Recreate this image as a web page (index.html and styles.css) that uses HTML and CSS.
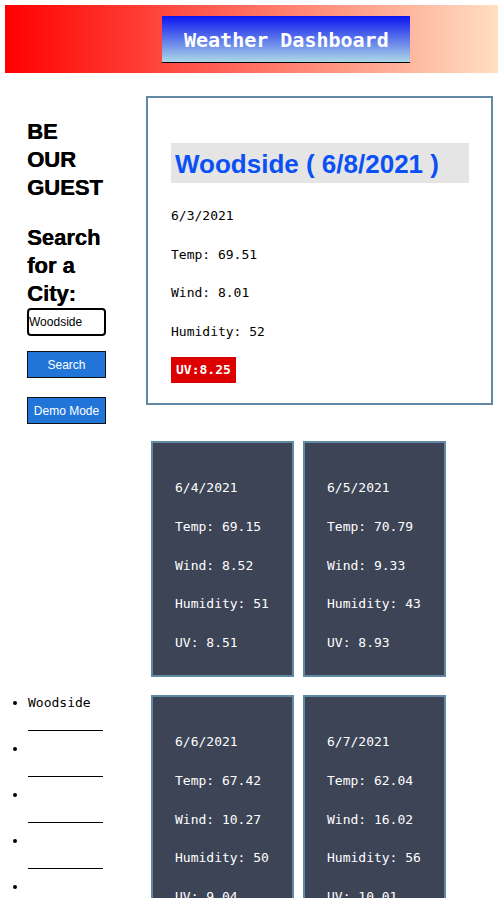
FILE: index.html
```html
<!DOCTYPE html>
<html lang="en">
<head>
<meta charset="utf-8">
<title>Weather Dashboard</title>
<link rel="stylesheet" href="styles.css">
</head>
<body>
<header class="header">
  <h1 class="title">Weather Dashboard</h1>
</header>
<div class="layout">
  <aside class="search">
    <h2 class="tagline">BE OUR GUEST</h2>
    <h2 class="tagline tagline-second">Search for a City:</h2>
    <input class="city-input" type="text" value="Woodside">
    <button class="btn btn-search">Search</button>
    <button class="btn btn-demo">Demo Mode</button>
  </aside>
  <section class="right">
    <div class="current">
      <h2 class="current-title">Woodside ( 6/8/2021 )</h2>
      <p class="line line-first">6/3/2021</p>
      <p class="line">Temp: 69.51</p>
      <p class="line">Wind: 8.01</p>
      <p class="line">Humidity: 52</p>
      <span class="uv">UV:8.25</span>
    </div>
    <div class="forecast forecast-first">
      <div class="day">
        <p class="day-line">6/4/2021</p>
        <p class="day-line">Temp: 69.15</p>
        <p class="day-line">Wind: 8.52</p>
        <p class="day-line">Humidity: 51</p>
        <p class="day-line">UV: 8.51</p>
      </div>
      <div class="day">
        <p class="day-line">6/5/2021</p>
        <p class="day-line">Temp: 70.79</p>
        <p class="day-line">Wind: 9.33</p>
        <p class="day-line">Humidity: 43</p>
        <p class="day-line">UV: 8.93</p>
      </div>
    </div>
  </section>
  <ul class="history">
    <li><span class="city">Woodside</span></li>
    <li><span class="city">&nbsp;</span></li>
    <li><span class="city">&nbsp;</span></li>
    <li><span class="city">&nbsp;</span></li>
    <li><span class="city">&nbsp;</span></li>
  </ul>
  <div class="forecast">
    <div class="day">
      <p class="day-line">6/6/2021</p>
      <p class="day-line">Temp: 67.42</p>
      <p class="day-line">Wind: 10.27</p>
      <p class="day-line">Humidity: 50</p>
      <p class="day-line">UV: 9.04</p>
    </div>
    <div class="day">
      <p class="day-line">6/7/2021</p>
      <p class="day-line">Temp: 62.04</p>
      <p class="day-line">Wind: 16.02</p>
      <p class="day-line">Humidity: 56</p>
      <p class="day-line">UV: 10.01</p>
    </div>
  </div>
</div>
</body>
</html>
```
FILE: styles.css
```css
html, body {
  margin: 0;
  padding: 0;
  background: #ffffff;
  overflow: hidden;
}

body {
  font-family: "DejaVu Sans Mono", "Liberation Mono", monospace;
  font-size: 13px;
  color: #000;
}

.header {
  margin: 5px 0 0 5px;
  height: 68px;
  box-sizing: border-box;
  padding: 11px 0 0 157px;
  background: linear-gradient(to right, #ff0000, #ffdfc2);
}

.title {
  display: inline-block;
  margin: 0;
  height: 47px;
  box-sizing: border-box;
  padding: 0 21px 0 22px;
  line-height: 48px;
  border-bottom: 1px solid #000;
  background: linear-gradient(#0a14f0, #add8e6);
  color: #fff;
  font-family: "DejaVu Sans Mono", monospace;
  font-weight: bold;
  font-size: 20px;
}

.layout {
  display: grid;
  grid-template-columns: 146px 1fr;
  row-gap: 18px;
  margin-top: 23px;
  align-items: start;
}

.search {
  padding: 22px 0 0 27px;
  display: flex;
  flex-direction: column;
  align-items: flex-start;
}

.tagline {
  width: 80px;
  margin: 0;
  font-family: "Liberation Sans", Arial, sans-serif;
  font-weight: bold;
  font-size: 22px;
  line-height: 28px;
  color: #000;
  text-shadow: 0.4px 0 0 #000;
}

.tagline-second {
  margin-top: 22px;
}

.city-input {
  width: 79px;
  height: 28px;
  box-sizing: border-box;
  margin: 0;
  padding: 0;
  border: 2px solid #000;
  border-radius: 4px;
  font-family: "Liberation Sans", Arial, sans-serif;
  font-size: 12px;
  color: #000;
  outline: none;
}

.btn {
  width: 79px;
  height: 27px;
  box-sizing: border-box;
  padding: 0;
  border: 1px solid #111;
  background: #2175d9;
  color: #fff;
  font-family: "Liberation Sans", Arial, sans-serif;
  font-size: 12px;
}

.btn-search {
  margin-top: 15px;
}

.btn-demo {
  margin-top: 19px;
}

.right {
  min-width: 0;
}

.current {
  margin-right: 5px;
  border: 2px solid #6289a3;
  padding: 45px 22px 20px 23px;
}

.current-title {
  margin: 0;
  height: 40px;
  line-height: 42px;
  padding-left: 4px;
  background: #e5e5e5;
  color: #0a50f5;
  font-family: "Liberation Sans", Arial, sans-serif;
  font-weight: bold;
  font-size: 26px;
}

.line {
  margin: 20.7px 0 0;
  line-height: 18px;
}

.line-first {
  margin-top: 24px;
}

.uv {
  display: inline-block;
  margin-top: 16px;
  padding: 0 5px;
  line-height: 26px;
  background: #dd0000;
  color: #fff;
  font-weight: bold;
}

.forecast {
  display: flex;
  gap: 9px;
  margin-left: 5px;
}

.forecast-first {
  margin-top: 36px;
}

.day {
  width: 143px;
  height: 236px;
  box-sizing: border-box;
  border: 2px solid #6289a3;
  background: #3c4456;
  color: #fff;
  padding: 36px 0 0 22px;
}

.day-line {
  margin: 0 0 20.75px;
  line-height: 18px;
}

.history {
  margin: 0;
  padding-left: 28px;
}

.history li {
  line-height: 16px;
}

.city {
  display: block;
  width: 75px;
  line-height: 16px;
  padding-bottom: 19px;
  border-bottom: 1px solid #000;
  margin-bottom: 10px;
}
```
